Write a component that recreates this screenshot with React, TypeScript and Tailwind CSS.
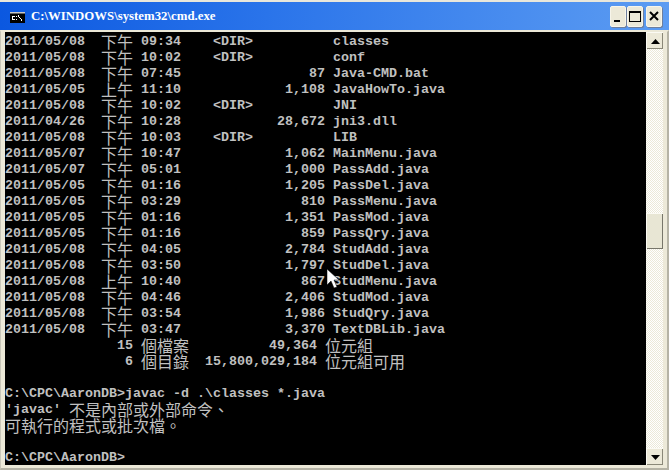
const rows: [string, string, string, string, string][] = [
  ["2011/05/08", "下午", "09:34", "<DIR>", "classes"],
  ["2011/05/08", "下午", "10:02", "<DIR>", "conf"],
  ["2011/05/08", "下午", "07:45", "87", "Java-CMD.bat"],
  ["2011/05/05", "上午", "11:10", "1,108", "JavaHowTo.java"],
  ["2011/05/08", "下午", "10:02", "<DIR>", "JNI"],
  ["2011/04/26", "下午", "10:28", "28,672", "jni3.dll"],
  ["2011/05/08", "下午", "10:03", "<DIR>", "LIB"],
  ["2011/05/07", "下午", "10:47", "1,062", "MainMenu.java"],
  ["2011/05/07", "下午", "05:01", "1,000", "PassAdd.java"],
  ["2011/05/05", "下午", "01:16", "1,205", "PassDel.java"],
  ["2011/05/05", "下午", "03:29", "810", "PassMenu.java"],
  ["2011/05/05", "下午", "01:16", "1,351", "PassMod.java"],
  ["2011/05/05", "下午", "01:16", "859", "PassQry.java"],
  ["2011/05/08", "下午", "04:05", "2,784", "StudAdd.java"],
  ["2011/05/08", "下午", "03:50", "1,797", "StudDel.java"],
  ["2011/05/08", "上午", "10:40", "867", "StudMenu.java"],
  ["2011/05/08", "下午", "04:46", "2,406", "StudMod.java"],
  ["2011/05/08", "下午", "03:54", "1,986", "StudQry.java"],
  ["2011/05/08", "下午", "03:47", "3,370", "TextDBLib.java"],
];

function Cjk({ children }: { children: string }) {
  return <span className="-translate-y-[1px] font-normal text-[16px] leading-4 font-['Noto_Sans_CJK_TC',sans-serif]">{children}</span>;
}

function Row({ children }: { children?: React.ReactNode }) {
  return <div className="flex h-4 items-center whitespace-pre">{children}</div>;
}

function TitleButton({ children }: { children: React.ReactNode }) {
  return (
    <div className="flex h-[21px] w-4 items-center justify-center rounded-[2px] border border-[#f7f5ea] bg-[#ece9d8] shadow-[1px_1px_0_#6e7f9c]">
      {children}
    </div>
  );
}

function ScrollButton({ down }: { down?: boolean }) {
  return (
    <div className="flex h-[17px] w-[17px] shrink-0 items-center justify-center border-t border-l border-[#fbfaf3] bg-[#ece9d8] shadow-[inset_-1px_-1px_0_#8a8878]">
      <svg width="9" height="5" viewBox="0 0 9 5">
        <path d={down ? "M0 0H9L4.5 5Z" : "M0 5H9L4.5 0Z"} fill="#000" />
      </svg>
    </div>
  );
}

export default function App() {
  return (
    <div className="flex h-[470px] w-[669px] flex-col overflow-hidden bg-[#ece9d8]">
      <div className="flex h-[30px] shrink-0 items-center border-t-2 border-[#e9e7db] bg-[linear-gradient(90deg,#0b58e0_0%,#2a74ea_40%,#5c9cf2_100%)] pl-[10px] pr-[6px]">
        <svg width="15" height="11" viewBox="0 0 15 11" className="mt-[2px] shrink-0">
          <rect width="15" height="11" fill="#000" />
          <rect x="0" y="0" width="15" height="1.5" fill="#c8c8c8" />
          <path d="M2 4H5V5H3V7H5V8H2ZM6 4H7V5H6ZM6 7H7V8H6ZM8 3H9V5H10V6H11V7H12V9H11V7H10V6H9V5H8Z" fill="#fff" />
        </svg>
        <span className="ml-[6px] text-[12.8px] font-bold leading-none text-white font-['Liberation_Serif',serif]">C:\WINDOWS\system32\cmd.exe</span>
        <div className="ml-auto flex gap-[1px] pr-[1px]">
          <TitleButton>
            <div className="mt-[9px] h-[2px] w-[6px] -translate-x-[1px] bg-black" />
          </TitleButton>
          <TitleButton>
            <div className="h-[11px] w-[12px] border border-t-2 border-black" />
          </TitleButton>
          <div className="w-[1px]" />
          <TitleButton>
            <svg width="10" height="10" viewBox="0 0 10 10">
              <path d="M1 1L9 9M9 1L1 9" stroke="#000" strokeWidth="2" />
            </svg>
          </TitleButton>
        </div>
      </div>
      <div className="flex min-h-0 flex-1 border-t-2 border-r-2 border-b-2 border-l border-t-[#ece9d8] border-r-[#b5b3a5] border-b-[#b5b3a5] border-l-[#c8c6b8] pl-[4px] pr-[3px]">
        <div className="relative h-[433px] w-[641px] overflow-hidden bg-black text-[13.33px] font-bold text-[#c0c0c0] font-['Liberation_Mono',monospace]">
          <div className="pt-[2px]">
            {rows.map((r) => (
              <Row key={r[4]}>
                <span>{r[0]}  </span>
                <Cjk>{r[1]}</Cjk>
                <span> {r[2]}</span>
                <span>{r[3] === "<DIR>" ? "    <DIR>         " : r[3].padStart(18)}</span>
                <span> {r[4]}</span>
              </Row>
            ))}
            <Row>
              <span>{"              15 "}</span>
              <Cjk>個檔案</Cjk>
              <span>{"          49,364 "}</span>
              <Cjk>位元組</Cjk>
            </Row>
            <Row>
              <span>{"               6 "}</span>
              <Cjk>個目錄</Cjk>
              <span>{"  15,800,029,184 "}</span>
              <Cjk>位元組可用</Cjk>
            </Row>
            <Row />
            <Row>
              <span>{"C:\\CPC\\AaronDB>javac -d .\\classes *.java"}</span>
            </Row>
            <Row>
              <span>{"'javac' "}</span>
              <Cjk>不是內部或外部命令、</Cjk>
            </Row>
            <Row>
              <Cjk>可執行的程式或批次檔。</Cjk>
            </Row>
            <Row />
            <Row>
              <span>{"C:\\CPC\\AaronDB>"}</span>
            </Row>
          </div>
          <svg width="12" height="19" viewBox="0 0 12 19" className="absolute left-[322px] top-[237px]">
            <path d="M0 0V16L4 12L7 19L10 18L7 11H12Z" fill="#fff" stroke="#000" strokeWidth="0.5" />
          </svg>
        </div>
        <div className="flex h-[433px] w-[17px] shrink-0 flex-col bg-[repeating-conic-gradient(#ffffff_0_25%,#ece9d8_0_50%)] bg-[length:2px_2px]">
          <ScrollButton />
          <div className="h-[164px] shrink-0" />
          <div className="h-[36px] shrink-0 border-t border-l border-[#fbfaf3] bg-[#e8e6d4] shadow-[inset_-1px_-1px_0_#77766a]" />
          <div className="flex-1" />
          <ScrollButton down />
        </div>
      </div>
    </div>
  );
}
